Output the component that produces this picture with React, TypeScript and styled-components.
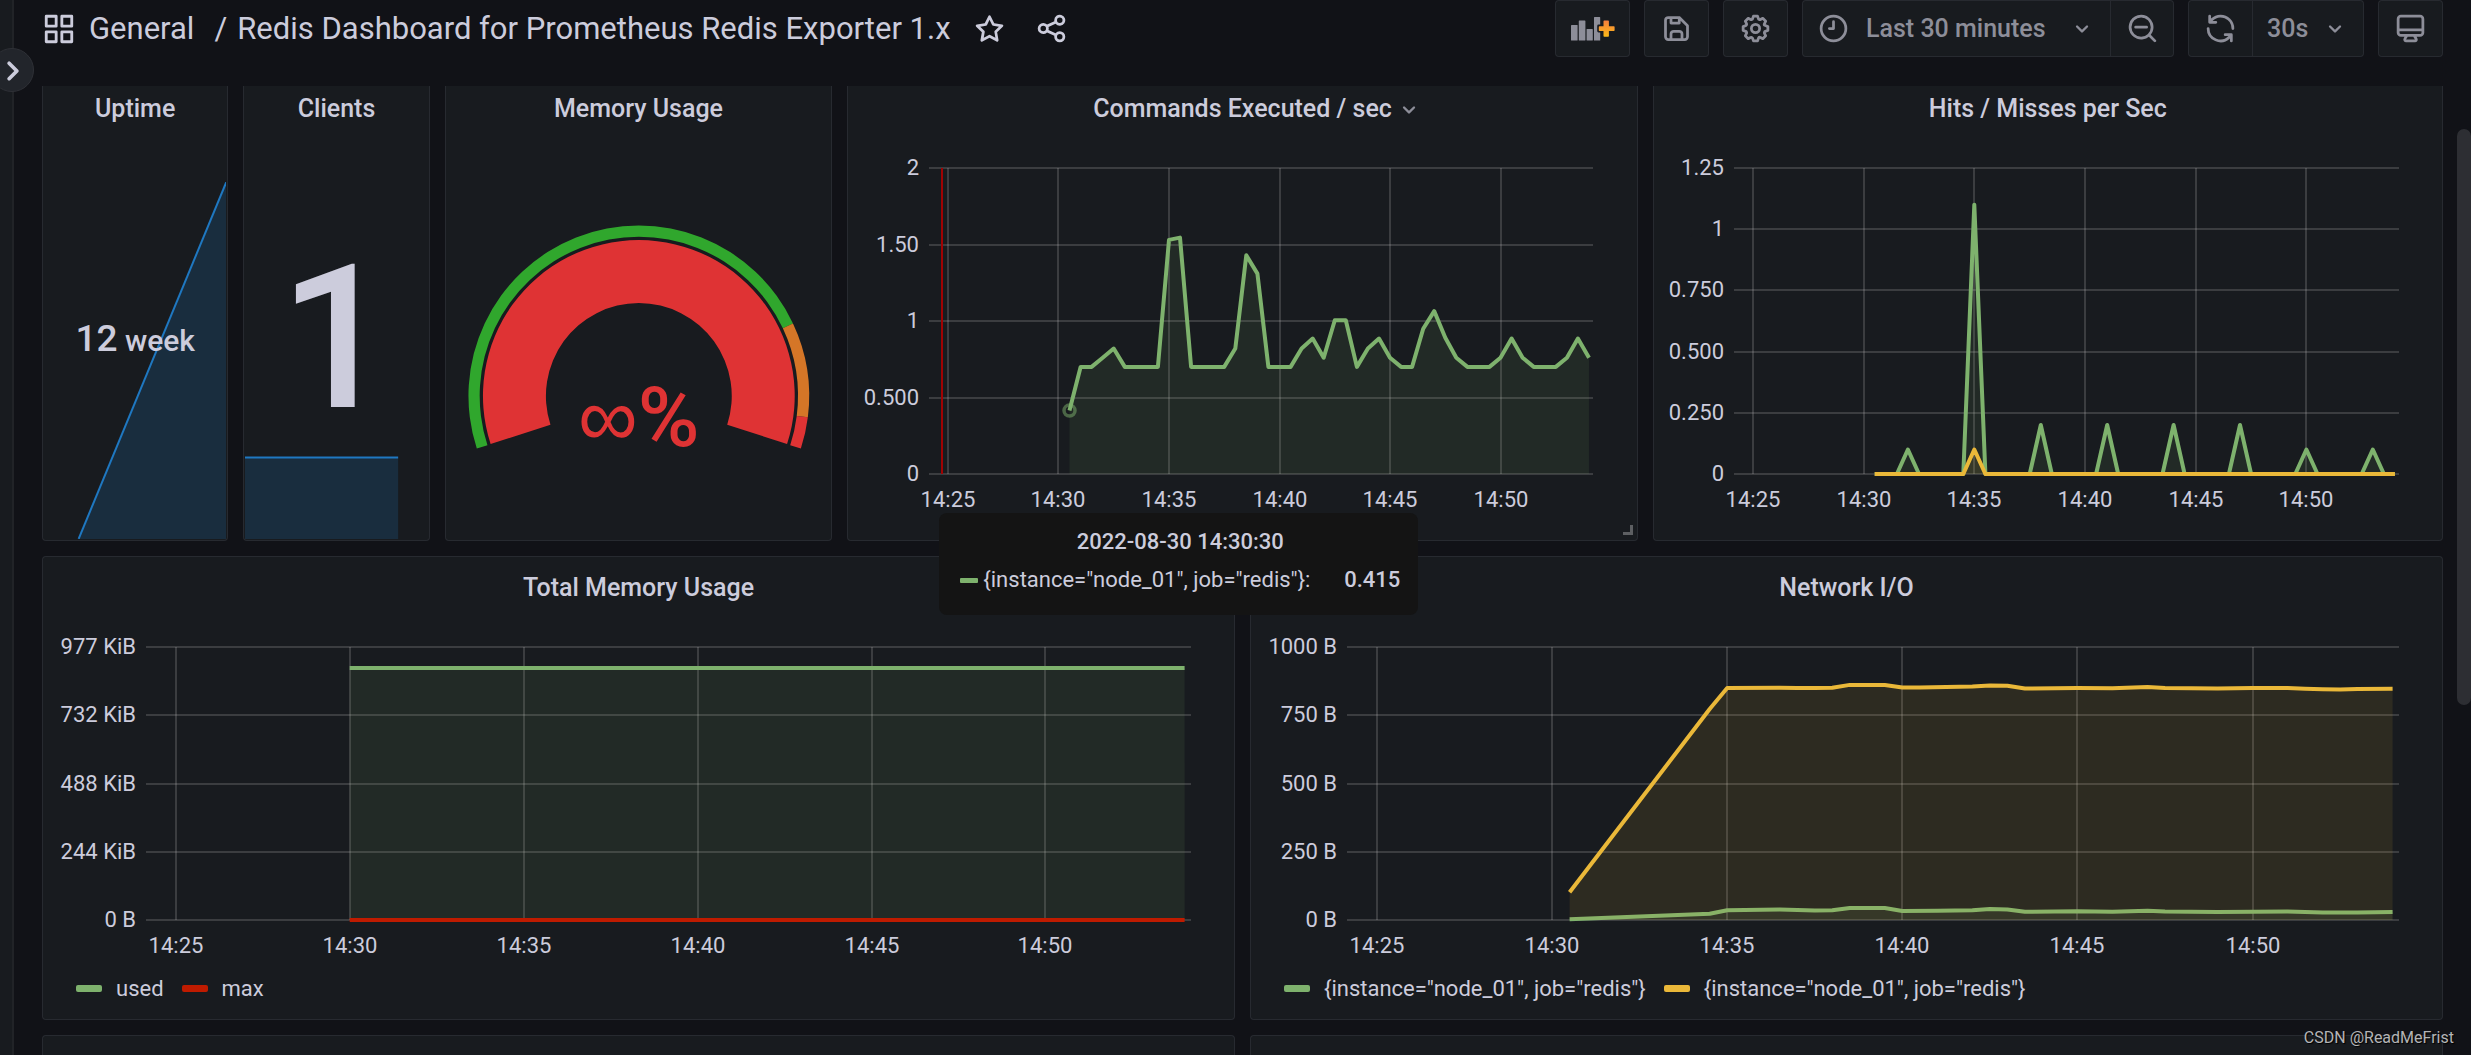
import React, { ReactNode, useLayoutEffect, useRef, useState } from 'react';
import styled, { createGlobalStyle } from 'styled-components';

const font = "Roboto, 'Noto Sans', 'Liberation Sans', sans-serif";

const color = {
  canvas: '#111217',
  panel: '#181b1f',
  raised: '#22252b',
  border: 'rgba(204, 204, 220, 0.09)',
  text: '#ccccdc',
  muted: '#8d8e99',
  grid: 'rgba(200, 200, 200, 0.2)',
  green: '#7eb26d',
  yellow: '#eab839',
  red: '#bf1b00',
  blue: '#1f78c1',
};

const GlobalStyle = createGlobalStyle`
  *, *::before, *::after { box-sizing: border-box; }
  body { margin: 0; background: ${color.canvas}; color: ${color.text}; font-family: ${font}; }
  button, select { font: inherit; color: inherit; }
`;

/* ---------- icons ---------- */

const icons = {
  apps: 'M10,13H3a1,1,0,0,0-1,1v7a1,1,0,0,0,1,1h7a1,1,0,0,0,1-1V14A1,1,0,0,0,10,13ZM9,20H4V15H9ZM21,2H14a1,1,0,0,0-1,1v7a1,1,0,0,0,1,1h7a1,1,0,0,0,1-1V3A1,1,0,0,0,21,2ZM20,9H15V4h5Zm1,4H14a1,1,0,0,0-1,1v7a1,1,0,0,0,1,1h7a1,1,0,0,0,1-1V14A1,1,0,0,0,21,13Zm-1,7H15V15h5ZM10,2H3A1,1,0,0,0,2,3v7a1,1,0,0,0,1,1h7a1,1,0,0,0,1-1V3A1,1,0,0,0,10,2ZM9,9H4V4H9Z',
  star: 'M22,9.67A1,1,0,0,0,21.14,9l-5.69-.83L12.9,3a1,1,0,0,0-1.8,0L8.55,8.16,2.86,9a1,1,0,0,0-.81.68,1,1,0,0,0,.25,1l4.13,4-1,5.68A1,1,0,0,0,6.9,21.44L12,18.77l5.1,2.67a.93.93,0,0,0,.46.12,1,1,0,0,0,.59-.19,1,1,0,0,0,.4-1l-1-5.68,4.13-4A1,1,0,0,0,22,9.67Zm-6.15,4a1,1,0,0,0-.29.88l.72,4.2-3.76-2a1.06,1.06,0,0,0-.94,0l-3.76,2,.72-4.2a1,1,0,0,0-.29-.88l-3-3,4.21-.61a1,1,0,0,0,.76-.55L12,5.7l1.88,3.82a1,1,0,0,0,.76.55l4.21.61Z',
  share: 'M18,14a4,4,0,0,0-3.08,1.48l-5.1-2.35a3.64,3.64,0,0,0,0-2.26l5.1-2.35A4,4,0,1,0,14,6a4.17,4.17,0,0,0,.07.71L8.79,9.14a4,4,0,1,0,0,5.72l5.28,2.43A4.17,4.17,0,0,0,14,18a4,4,0,1,0,4-4ZM18,4a2,2,0,1,1-2,2A2,2,0,0,1,18,4ZM6,14a2,2,0,1,1,2-2A2,2,0,0,1,6,14Zm12,6a2,2,0,1,1,2-2A2,2,0,0,1,18,20Z',
  save: 'M20.71,9.29l-6-6a1,1,0,0,0-.32-.21A1.09,1.09,0,0,0,14,3H6A3,3,0,0,0,3,6V18a3,3,0,0,0,3,3H18a3,3,0,0,0,3-3V10A1,1,0,0,0,20.71,9.29ZM9,5h4V7H9Zm6,14H9V16a1,1,0,0,1,1-1h4a1,1,0,0,1,1,1Zm4-1a1,1,0,0,1-1,1H17V16a3,3,0,0,0-3-3H10a3,3,0,0,0-3,3v3H6a1,1,0,0,1-1-1V6A1,1,0,0,1,6,5H7V8A1,1,0,0,0,8,9h6a1,1,0,0,0,1-1V6.41l4,4Z',
  cog: 'M21.32,9.55l-1.89-.63.89-1.78A1,1,0,0,0,20.13,6L18,3.87a1,1,0,0,0-1.15-.19l-1.78.89-.63-1.89A1,1,0,0,0,13.5,2h-3a1,1,0,0,0-.95.68L8.92,4.57,7.14,3.68A1,1,0,0,0,6,3.87L3.87,6a1,1,0,0,0-.19,1.15l.89,1.78-1.89.63A1,1,0,0,0,2,10.5v3a1,1,0,0,0,.68.95l1.89.63-.89,1.78A1,1,0,0,0,3.87,18L6,20.13a1,1,0,0,0,1.15.19l1.78-.89.63,1.89a1,1,0,0,0,.95.68h3a1,1,0,0,0,.95-.68l.63-1.89,1.78.89A1,1,0,0,0,18,20.13L20.13,18a1,1,0,0,0,.19-1.15l-.89-1.78,1.89-.63A1,1,0,0,0,22,13.5v-3A1,1,0,0,0,21.32,9.55ZM20,12.78l-1.2.4A2,2,0,0,0,17.64,16l.57,1.14-1.1,1.1L16,17.64a2,2,0,0,0-2.79,1.16l-.4,1.2H11.22l-.4-1.2A2,2,0,0,0,8,17.64l-1.14.57-1.1-1.1L6.36,16A2,2,0,0,0,5.2,13.18L4,12.78V11.22l1.2-.4A2,2,0,0,0,6.36,8L5.79,6.89l1.1-1.1L8,6.36A2,2,0,0,0,10.82,5.2l.4-1.2h1.56l.4,1.2A2,2,0,0,0,16,6.36l1.14-.57,1.1,1.1L17.64,8a2,2,0,0,0,1.16,2.79l1.2.4ZM12,8a4,4,0,1,0,4,4A4,4,0,0,0,12,8Zm0,6a2,2,0,1,1,2-2A2,2,0,0,1,12,14Z',
  clock: 'M12,2A10,10,0,1,0,22,12,10,10,0,0,0,12,2Zm0,18a8,8,0,1,1,8-8A8,8,0,0,1,12,20ZM12,6a1,1,0,0,0-1,1v4H9a1,1,0,0,0,0,2h3a1,1,0,0,0,1-1V7A1,1,0,0,0,12,6Z',
  zoomOut: 'M21.71,20.29,18,16.61A9,9,0,1,0,16.61,18l3.68,3.68a1,1,0,0,0,1.42,0A1,1,0,0,0,21.71,20.29ZM11,18a7,7,0,1,1,7-7A7,7,0,0,1,11,18Zm4-8H7a1,1,0,0,0,0,2h8a1,1,0,0,0,0-2Z',
  sync: 'M19.91,15.51H15.38a1,1,0,0,0,0,2h2.4A8,8,0,0,1,4,12a1,1,0,0,0-2,0,10,10,0,0,0,16.88,7.23V21a1,1,0,0,0,2,0V16.5A1,1,0,0,0,19.91,15.51ZM12,2A10,10,0,0,0,5.12,4.77V3a1,1,0,0,0-2,0V7.5a1,1,0,0,0,1,1h4.5a1,1,0,0,0,0-2H6.22A8,8,0,0,1,20,12a1,1,0,0,0,2,0A10,10,0,0,0,12,2Z',
  monitor: 'M19,2H5A3,3,0,0,0,2,5V15a3,3,0,0,0,3,3H7.64l-.58,1a2,2,0,0,0,0,2,2,2,0,0,0,1.75,1h6.46A2,2,0,0,0,17,21a2,2,0,0,0,0-2l-.59-1H19a3,3,0,0,0,3-3V5A3,3,0,0,0,19,2ZM8.77,20,10,18H14l1.2,2ZM20,15a1,1,0,0,1-1,1H5a1,1,0,0,1-1-1V14H20Zm0-3H4V5A1,1,0,0,1,5,4H19a1,1,0,0,1,1,1Z',
  angleDown: 'M17,9.17a1,1,0,0,0-1.41,0L12,12.71,8.46,9.17a1,1,0,0,0-1.41,0,1,1,0,0,0,0,1.42l4.24,4.24a1,1,0,0,0,1.42,0L17,10.59A1,1,0,0,0,17,9.17Z',
  angleRight: 'M14.83,11.29,10.59,7.05a1,1,0,0,0-1.42,0,1,1,0,0,0,0,1.41L12.71,12,9.17,15.54a1,1,0,0,0,0,1.41,1,1,0,0,0,.71.29,1,1,0,0,0,.71-.29l4.24-4.24A1,1,0,0,0,14.83,11.29Z',
};

const IconSvg = styled.svg`
  display: block;
  flex: none;
  fill: currentColor;
`;

function Icon({ name, size = 33 }: { name: keyof typeof icons; size?: number }) {
  return (
    <IconSvg width={size} height={size} viewBox="0 0 24 24" aria-hidden="true">
      <path d={icons[name]} />
    </IconSvg>
  );
}

function AddPanelIcon() {
  return (
    <IconSvg width={44} height={24} viewBox="0 0 44 24" aria-hidden="true">
      <defs>
        <linearGradient id="add-plus" x1="0" y1="0" x2="0" y2="1">
          <stop offset="0" stopColor="#f57f3d" />
          <stop offset="1" stopColor="#fbb917" />
        </linearGradient>
      </defs>
      <rect x="0" y="8" width="6.6" height="15.5" rx="0.6" />
      <rect x="7.8" y="3.4" width="6.6" height="20.1" rx="0.6" />
      <rect x="15.6" y="12" width="6.2" height="11.5" rx="0.6" />
      <path d="M23 .6q0-.6.6-.6h5q.6 0 .6.6V7.6h-1.6q-1.4 0-1.4 1.4v5q0 1.4 1.4 1.4h1.6v8.1H23Z" />
      <path
        fill="url(#add-plus)"
        d="M33.2 3.6h4q.7 0 .7.7v4.9h5q.7 0 .7.7v3.3q0 .7-.7.7h-5v5.1q0 .7-.7.7h-4q-.7 0-.7-.7v-5.1h-4q-.7 0-.7-.7V9.900q0-.7.7-.7h4V4.300q0-.7.7-.7Z"
      />
    </IconSvg>
  );
}

/* ---------- shell ---------- */

const Shell = styled.div`
  display: flex;
  height: 100vh;
  overflow: hidden;
`;

const SideRail = styled.aside`
  position: relative;
  z-index: 2;
  flex: none;
  width: 14px;
  background: ${color.panel};
  border-right: 2px solid #212327;
`;

const RailToggle = styled.button`
  position: absolute;
  top: 48px;
  left: -10px;
  display: grid;
  place-items: center;
  width: 44px;
  height: 44px;
  padding: 0;
  border: 1px solid #2e3036;
  border-radius: 50%;
  background: ${color.raised};
`;

const Main = styled.main`
  display: flex;
  flex: 1;
  flex-direction: column;
  min-width: 0;
  padding: 0 28px;
`;

const TopBar = styled.header`
  display: flex;
  flex: none;
  align-items: flex-start;
  justify-content: space-between;
  height: 86px;
`;

const Heading = styled.div`
  display: flex;
  align-items: center;
  height: 57px;
`;

const Crumbs = styled.h1`
  display: flex;
  gap: 10px;
  margin: 0 22px 0 13px;
  font-size: 31px;
  font-weight: 400;
  line-height: 40px;
  white-space: nowrap;

  a {
    color: inherit;
    text-decoration: none;
  }
`;

const CrumbRoot = styled.span`
  padding-right: 10px;
`;

const HeadingActions = styled.div`
  display: flex;
  gap: 29px;
`;

const PlainButton = styled.button`
  display: grid;
  place-items: center;
  padding: 0;
  border: 0;
  background: none;
`;

const Toolbar = styled.div`
  display: flex;
  gap: 14px;
  color: ${color.muted};
`;

const ToolGroup = styled.div`
  display: flex;
  height: 57px;
  border: 1px solid ${color.border};
  border-radius: 4px;
  background: ${color.panel};
`;

const ToolButton = styled.button<{ $wide?: boolean; $divided?: boolean }>`
  display: grid;
  place-items: center;
  width: ${(p) => (p.$wide ? 73 : 63)}px;
  padding: 0;
  border: 0;
  border-left: ${(p) => (p.$divided ? `1px solid ${color.border}` : '0')};
  background: none;
`;

const Picker = styled.label<{ $divided?: boolean }>`
  display: flex;
  align-items: center;
  padding: 0 14px;
  border-left: ${(p) => (p.$divided ? `1px solid ${color.border}` : '0')};
`;

const PickerSelect = styled.select<{ $lead?: boolean }>`
  appearance: none;
  margin: ${(p) => (p.$lead ? '0 22px 0 16px' : '0 12px 0 0')};
  padding: 0;
  border: 0;
  background: none;
  font-size: 25px;
  font-weight: 500;
  line-height: 32px;
`;

/* ---------- panels ---------- */

const Viewport = styled.div`
  flex: 1;
  min-height: 0;
  overflow: hidden;
`;

const Dashboard = styled.div`
  display: grid;
  grid-template-columns: repeat(24, minmax(0, 1fr));
  grid-auto-rows: 464px;
  gap: 15px;
  margin-top: -9px;
`;

const PanelBox = styled.section<{ $span: number }>`
  position: relative;
  display: flex;
  flex-direction: column;
  grid-column: span ${(p) => p.$span};
  min-width: 0;
  border: 1px solid ${color.border};
  border-radius: 4px;
  background: ${color.panel};
`;

const PanelHeader = styled.header`
  display: flex;
  flex: none;
  justify-content: center;
  padding: 15px 0 13px;
`;

const PanelTitle = styled.h2`
  position: relative;
  margin: 0;
  font-size: 25px;
  font-weight: 500;
  line-height: 32px;
`;

const TitleMenu = styled.button`
  position: absolute;
  top: 3px;
  left: 100%;
  margin-left: 3px;
  padding: 0;
  border: 0;
  background: none;
  color: ${color.muted};
`;

const ResizeHandle = styled.span`
  position: absolute;
  right: 4px;
  bottom: 5px;
  width: 10px;
  height: 10px;
  border: solid #5d5f62;
  border-width: 0 3px 3px 0;
`;

function Panel({
  title,
  span,
  menu,
  children,
}: {
  title?: string;
  span: number;
  menu?: boolean;
  children?: ReactNode;
}) {
  return (
    <PanelBox $span={span}>
      {title && (
        <PanelHeader>
          <PanelTitle>
            {title}
            {menu && (
              <TitleMenu aria-label={`${title} menu`}>
                <Icon name="angleDown" size={28} />
              </TitleMenu>
            )}
          </PanelTitle>
        </PanelHeader>
      )}
      {children}
      {menu && <ResizeHandle />}
    </PanelBox>
  );
}

/* ---------- single stats ---------- */

const StatBody = styled.div`
  display: grid;
  flex: 1;
  min-height: 0;
  padding: 0 1px 1px;
`;

const Spark = styled.svg<{ $height: number }>`
  display: block;
  grid-area: 1 / 1;
  align-self: end;
  width: 100%;
  height: ${(p) => p.$height}%;
`;

const StatValue = styled.p<{ $size: number }>`
  z-index: 1;
  grid-area: 1 / 1;
  place-self: center;
  margin: 0;
  font-size: ${(p) => p.$size}px;
  font-weight: 500;
  line-height: 1;
  white-space: nowrap;
`;

const StatUnit = styled.span`
  font-size: 30px;
`;

function Sparkline({ height, points }: { height: number; points: [number, number][] }) {
  const line = points.map((p) => p.join(',')).join(' ');
  const first = points[0][0];
  const last = points[points.length - 1][0];
  return (
    <Spark $height={height} viewBox="0 0 100 100" preserveAspectRatio="none" aria-hidden="true">
      <polygon points={`${first},100 ${line} ${last},100`} fill="rgba(31, 118, 189, 0.2)" />
      <polyline
        points={line}
        fill="none"
        stroke={color.blue}
        strokeWidth={2}
        vectorEffect="non-scaling-stroke"
      />
    </Spark>
  );
}

/* ---------- gauge ---------- */

const GaugeSvg = styled.svg`
  display: block;
  flex: 1;
  width: 100%;
  min-height: 0;
  font-family: ${font};
`;

const gauge = {
  cx: 193,
  cy: 258,
  ok: 'rgba(50, 172, 45, 0.97)',
  warn: 'rgba(237, 129, 40, 0.89)',
  crit: 'rgba(245, 54, 54, 0.9)',
};

/** Ring segment between two fractions of the 216 degree sweep. */
function ring(from: number, to: number, outer: number, inner: number) {
  const at = (f: number, r: number) => {
    const a = ((198 - 216 * f) * Math.PI) / 180;
    return `${(gauge.cx + r * Math.cos(a)).toFixed(2)} ${(gauge.cy - r * Math.sin(a)).toFixed(2)}`;
  };
  const large = (to - from) * 216 > 180 ? 1 : 0;
  return `M${at(from, outer)}A${outer} ${outer} 0 ${large} 1 ${at(to, outer)}L${at(to, inner)}A${inner} ${inner} 0 ${large} 0 ${at(from, inner)}Z`;
}

function Gauge() {
  return (
    <GaugeSvg viewBox="0 0 386 402" role="img" aria-label="Memory usage gauge">
      <path d={ring(0, 0.8, 170.5, 159.3)} fill={gauge.ok} />
      <path d={ring(0.8, 0.95, 170.5, 159.3)} fill={gauge.warn} />
      <path d={ring(0.95, 1, 170.5, 159.3)} fill={gauge.crit} />
      <path d={ring(0, 1, 156, 93)} fill={gauge.crit} />
      <text x={gauge.cx} y={308} textAnchor="middle" fontSize={84} fontWeight={500} fill={gauge.crit}>
        <tspan fontFamily="'Liberation Sans', sans-serif" fontWeight={400}>
          ∞
        </tspan>
        %
      </text>
    </GaugeSvg>
  );
}

/* ---------- time series ---------- */

type Point = [minute: number, value: number];

interface Series {
  color: string;
  points: Point[];
}

const ChartArea = styled.div`
  flex: 1;
  min-height: 0;
  margin-bottom: 14px;
  overflow: hidden;
`;

const ChartSvg = styled.svg`
  display: block;
  font-family: ${font};
  font-size: 22px;
  fill: ${color.text};
`;

const timeTicks = [25, 30, 35, 40, 45, 50];
const domainStart = 24.143;
const domainSpan = 30.04;

function Chart({
  left,
  max,
  yLabels,
  series,
  crosshair,
  marker,
}: {
  left: number;
  max: number;
  yLabels: string[];
  series: Series[];
  crosshair?: number;
  marker?: Point;
}) {
  const ref = useRef<HTMLDivElement>(null);
  const [size, setSize] = useState({ width: 0, height: 0 });

  useLayoutEffect(() => {
    const el = ref.current!;
    const measure = () => setSize({ width: el.clientWidth, height: el.clientHeight });
    measure();
    const observer = new ResizeObserver(measure);
    observer.observe(el);
    return () => observer.disconnect();
  }, []);

  const { width, height } = size;
  const right = width - 43;
  const top = 30;
  const bottom = height - 52;
  const x = (m: number) => left + ((m - domainStart) / domainSpan) * (right - left);
  const y = (v: number) => bottom - (v / max) * (bottom - top);

  return (
    <ChartArea ref={ref}>
      {width > 0 && (
        <ChartSvg width={width} height={height}>
          {yLabels.map((label, i) => {
            const ly = Math.round(top + (i * (bottom - top)) / (yLabels.length - 1));
            return (
              <g key={label}>
                <line x1={left} x2={right} y1={ly} y2={ly} stroke={color.grid} strokeWidth={2} />
                <text x={left - 10} y={ly + 7} textAnchor="end">
                  {label}
                </text>
              </g>
            );
          })}
          {timeTicks.map((m) => {
            const tx = Math.round(x(m));
            return (
              <g key={m}>
                <line x1={tx} x2={tx} y1={top} y2={bottom} stroke={color.grid} strokeWidth={2} />
                <text x={tx} y={bottom + 33} textAnchor="middle">
                  {`14:${m}`}
                </text>
              </g>
            );
          })}
          {crosshair !== undefined && (
            <line
              x1={Math.round(x(crosshair))}
              x2={Math.round(x(crosshair))}
              y1={top}
              y2={bottom}
              stroke="#a00303"
              strokeWidth={2}
            />
          )}
          {series.map((s, i) => {
            const line = s.points.map(([m, v]) => `${x(m).toFixed(1)},${y(v).toFixed(1)}`).join(' ');
            const x0 = x(s.points[0][0]);
            const x1 = x(s.points[s.points.length - 1][0]);
            return (
              <g key={i}>
                <polygon points={`${x0},${bottom} ${line} ${x1},${bottom}`} fill={s.color} fillOpacity={0.1} />
                <polyline points={line} fill="none" stroke={s.color} strokeWidth={4} strokeLinejoin="round" />
              </g>
            );
          })}
          {marker && (
            <circle
              cx={x(marker[0])}
              cy={y(marker[1])}
              r={5.5}
              fill="none"
              stroke={color.green}
              strokeOpacity={0.5}
              strokeWidth={3.5}
            />
          )}
        </ChartSvg>
      )}
    </ChartArea>
  );
}

const Legend = styled.ul`
  display: flex;
  gap: 18px;
  height: 33px;
  margin: -14px 0 14px;
  padding: 0 0 0 33px;
  list-style: none;
`;

const LegendItem = styled.button`
  display: flex;
  align-items: center;
  gap: 14px;
  padding: 0;
  border: 0;
  background: none;
  font-size: 22px;
  line-height: 33px;
`;

const Swatch = styled.span<{ $color: string; $small?: boolean }>`
  width: ${(p) => (p.$small ? 18 : 26)}px;
  height: ${(p) => (p.$small ? 5 : 7)}px;
  border-radius: ${(p) => (p.$small ? 1 : 2)}px;
  background: ${(p) => p.$color};
`;

function ChartLegend({ items }: { items: [string, string][] }) {
  return (
    <Legend>
      {items.map(([swatch, label]) => (
        <li key={swatch}>
          <LegendItem>
            <Swatch $color={swatch} />
            {label}
          </LegendItem>
        </li>
      ))}
    </Legend>
  );
}

/* ---------- overlays ---------- */

const Tooltip = styled.div`
  position: absolute;
  z-index: 3;
  top: 435px;
  left: 91px;
  width: 479px;
  height: 102px;
  padding: 13px 18px 0 21px;
  border-radius: 8px;
  background: #141414;
  font-size: 22px;
  line-height: 32px;
  white-space: nowrap;
`;

const TooltipTime = styled.div`
  font-weight: 500;
  text-align: center;
`;

const TooltipRow = styled.div`
  display: flex;
  align-items: center;
  gap: 5px;
  margin-top: 6px;

  strong {
    margin-left: auto;
    font-weight: 500;
  }
`;

const ScrollThumb = styled.div`
  position: absolute;
  top: 129px;
  right: 0;
  width: 14px;
  height: 576px;
  border-radius: 7px;
  background: #2d2e33;
`;

const Watermark = styled.div`
  position: absolute;
  right: 17px;
  bottom: 7px;
  color: #b4b4b6;
  font-size: 16px;
  line-height: 20px;
  text-shadow: 1px 1px 1px #000;
`;

/* ---------- data ---------- */

/** Samples taken every 30 seconds, starting at the given minute. */
const every30s = (start: number, values: number[]): Point[] => values.map((v, i) => [start + i / 2, v]);

const commands = every30s(30.5, [
  0.415, 0.7, 0.7, 0.76, 0.82, 0.7, 0.7, 0.7, 0.7, 1.53, 1.545, 0.7, 0.7, 0.7, 0.7, 0.82, 1.43, 1.31, 0.7, 0.7,
  0.7, 0.82, 0.885, 0.76, 1.005, 1.005, 0.7, 0.82, 0.885, 0.76, 0.7, 0.7, 0.95, 1.065, 0.89, 0.76, 0.7, 0.7, 0.7,
  0.76, 0.885, 0.76, 0.7, 0.7, 0.7, 0.76, 0.885, 0.76,
]);

const spikes = (peaks: Record<number, number>): Point[] => {
  const out: Point[] = [];
  for (let m = 30.5; m <= 54; m += 0.5) out.push([m, peaks[m] ?? 0]);
  return out;
};

const hits = spikes({ 32: 0.1, 35: 1.1, 38: 0.2, 41: 0.2, 44: 0.2, 47: 0.2, 50: 0.1, 53: 0.1 });
const misses = spikes({ 35: 0.1 });

const netIn: Point[] = [
  [30.5, 3], [34.5, 23], [35, 36], [36.5, 38], [37.5, 35], [38, 36], [38.5, 44], [39.5, 44], [40, 33], [41, 34],
  [42, 36], [42.5, 40], [43, 39], [43.5, 30], [45, 32], [46, 30], [47, 34], [47.5, 31], [49, 29], [50, 30],
  [51, 31], [52, 27], [53, 27], [54, 29],
];

const netOut: Point[] = [
  [30.5, 102], [34.5, 773], [35, 850], [36.5, 851], [37, 850], [37.5, 850], [38, 851], [38.5, 861], [39.5, 861],
  [40, 852], [40.5, 852], [42, 855], [42.5, 859], [43, 858], [43.5, 848], [45, 850], [46, 849], [47, 853],
  [47.5, 850], [49, 848], [50, 850], [51, 850], [51.5, 847], [52, 845], [52.5, 844], [53, 846], [54, 847],
];

const instance = '{instance="node_01", job="redis"}';

/* ---------- page ---------- */

export default function App() {
  return (
    <Shell>
      <GlobalStyle />
      <SideRail>
        <RailToggle aria-label="Expand sidebar">
          <Icon name="angleRight" size={44} />
        </RailToggle>
      </SideRail>
      <Main>
        <TopBar>
          <Heading>
            <Icon name="apps" size={34} />
            <Crumbs>
              <CrumbRoot>
                <a href="#general">General</a>
              </CrumbRoot>
              <span>/</span>
              <a href="#dashboard">Redis Dashboard for Prometheus Redis Exporter 1.x</a>
            </Crumbs>
            <HeadingActions>
              <PlainButton aria-label="Mark as favorite">
                <Icon name="star" />
              </PlainButton>
              <PlainButton aria-label="Share dashboard">
                <Icon name="share" />
              </PlainButton>
            </HeadingActions>
          </Heading>
          <Toolbar>
            <ToolGroup>
              <ToolButton $wide aria-label="Add panel">
                <AddPanelIcon />
              </ToolButton>
            </ToolGroup>
            <ToolGroup>
              <ToolButton aria-label="Save dashboard">
                <Icon name="save" />
              </ToolButton>
            </ToolGroup>
            <ToolGroup>
              <ToolButton aria-label="Dashboard settings">
                <Icon name="cog" />
              </ToolButton>
            </ToolGroup>
            <ToolGroup>
              <Picker>
                <Icon name="clock" />
                <PickerSelect $lead aria-label="Time range" defaultValue="30m">
                  <option value="30m">Last 30 minutes</option>
                  <option value="1h">Last 1 hour</option>
                </PickerSelect>
                <Icon name="angleDown" size={28} />
              </Picker>
              <ToolButton $divided aria-label="Zoom out">
                <Icon name="zoomOut" />
              </ToolButton>
            </ToolGroup>
            <ToolGroup>
              <ToolButton aria-label="Refresh">
                <Icon name="sync" />
              </ToolButton>
              <Picker $divided>
                <PickerSelect aria-label="Refresh interval" defaultValue="30s">
                  <option>10s</option>
                  <option>30s</option>
                </PickerSelect>
                <Icon name="angleDown" size={28} />
              </Picker>
            </ToolGroup>
            <ToolGroup>
              <ToolButton aria-label="Cycle view mode">
                <Icon name="monitor" />
              </ToolButton>
            </ToolGroup>
          </Toolbar>
        </TopBar>
        <Viewport>
          <Dashboard>
            <Panel title="Uptime" span={2}>
              <StatBody>
                <Sparkline height={89} points={[[19, 100], [100, 0]]} />
                <StatValue $size={37}>
                  12<StatUnit> week</StatUnit>
                </StatValue>
              </StatBody>
            </Panel>
            <Panel title="Clients" span={2}>
              <StatBody>
                <Sparkline height={21} points={[[0, 3], [84, 3]]} />
                <StatValue $size={201}>1</StatValue>
              </StatBody>
            </Panel>
            <Panel title="Memory Usage" span={4}>
              <Gauge />
            </Panel>
            <Panel title="Commands Executed / sec" span={8} menu>
              <Chart
                left={81}
                max={2}
                yLabels={['2', '1.50', '1', '0.500', '0']}
                series={[{ color: color.green, points: commands }]}
                crosshair={24.75}
                marker={commands[0]}
              />
              <Tooltip role="tooltip">
                <TooltipTime>2022-08-30 14:30:30</TooltipTime>
                <TooltipRow>
                  <Swatch $small $color={color.green} />
                  {instance}:<strong>0.415</strong>
                </TooltipRow>
              </Tooltip>
            </Panel>
            <Panel title="Hits / Misses per Sec" span={8}>
              <Chart
                left={80}
                max={1.25}
                yLabels={['1.25', '1', '0.750', '0.500', '0.250', '0']}
                series={[
                  { color: color.green, points: hits },
                  { color: color.yellow, points: misses },
                ]}
              />
            </Panel>
            <Panel title="Total Memory Usage" span={12}>
              <Chart
                left={103}
                max={977}
                yLabels={['977 KiB', '732 KiB', '488 KiB', '244 KiB', '0 B']}
                series={[
                  { color: color.green, points: [[30, 902], [54, 902]] },
                  { color: color.red, points: [[30, 0], [54, 0]] },
                ]}
              />
              <ChartLegend items={[[color.green, 'used'], [color.red, 'max']]} />
            </Panel>
            <Panel title="Network I/O" span={12}>
              <Chart
                left={96}
                max={1000}
                yLabels={['1000 B', '750 B', '500 B', '250 B', '0 B']}
                series={[
                  { color: color.green, points: netIn },
                  { color: color.yellow, points: netOut },
                ]}
              />
              <ChartLegend items={[[color.green, instance], [color.yellow, instance]]} />
            </Panel>
            <Panel span={12} />
            <Panel span={12} />
          </Dashboard>
        </Viewport>
      </Main>
      <ScrollThumb />
      <Watermark>CSDN @ReadMeFrist</Watermark>
    </Shell>
  );
}
